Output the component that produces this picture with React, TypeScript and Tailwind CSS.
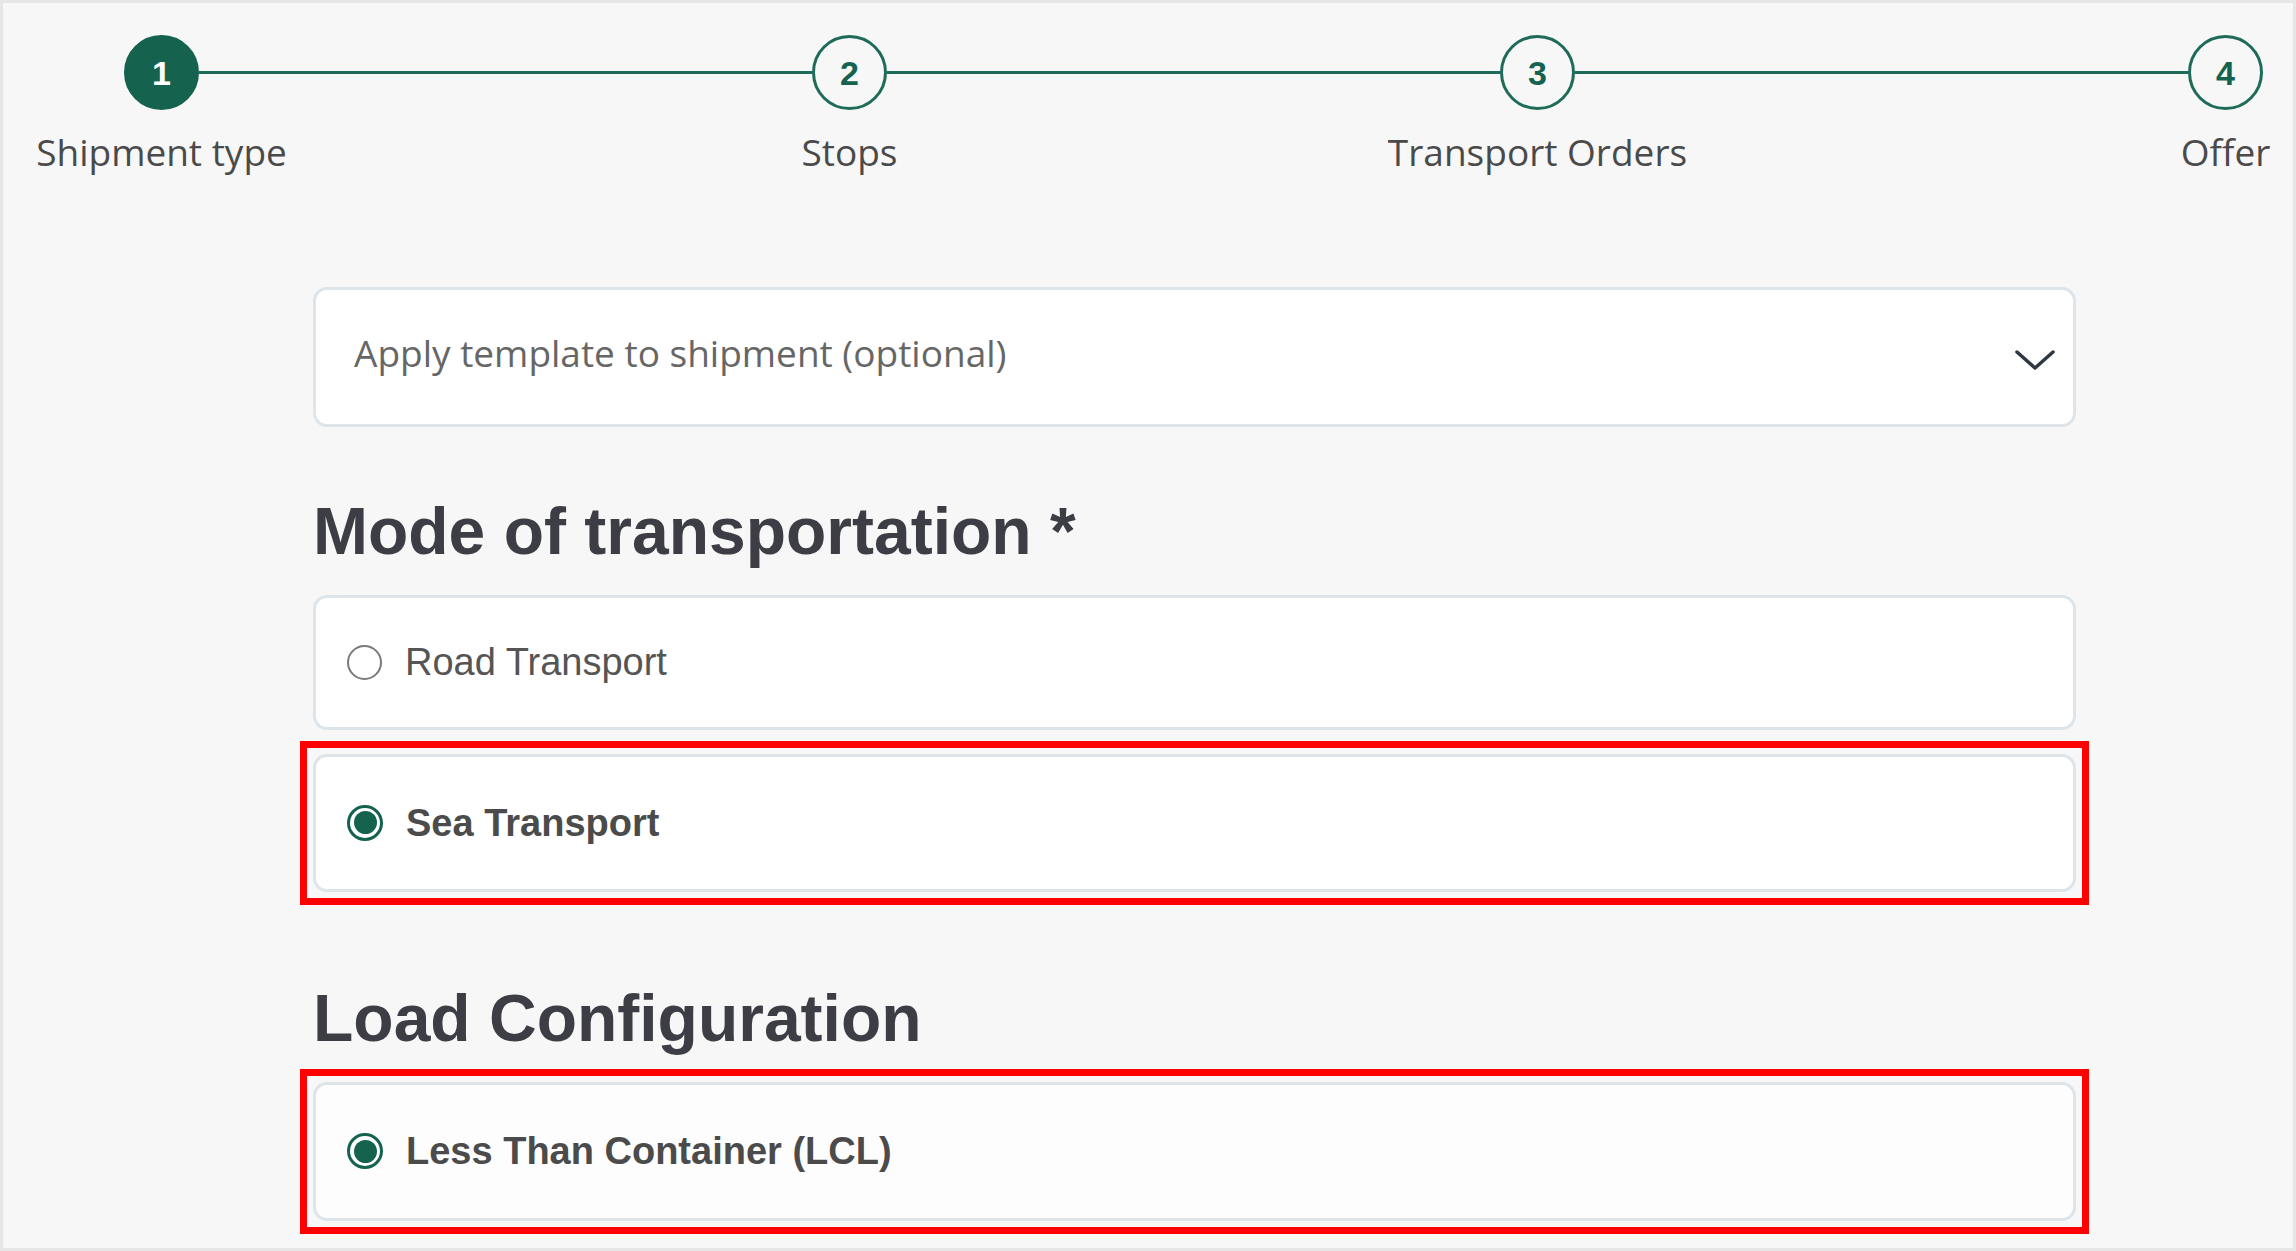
import React from "react";

function Step({ n, label, active }: { n: number; label: string; active?: boolean }) {
  return (
    <div className="flex w-[75px] shrink-0 flex-col items-center">
      <div
        className={
          active
            ? "flex h-[75px] w-[75px] items-center justify-center rounded-full border-[3px] border-[#15624f] bg-[#15624f] font-['Liberation_Sans',Arial,sans-serif] text-[34px] font-bold leading-none text-white"
            : "flex h-[75px] w-[75px] items-center justify-center rounded-full border-[3px] border-[#1e6b5a] bg-[#f7f7f7] font-['Liberation_Sans',Arial,sans-serif] text-[34px] font-bold leading-none text-[#15624f]"
        }
      >
        {n}
      </div>
      <div className="mt-[14px] whitespace-nowrap font-['Open_Sans',sans-serif] text-[37px] leading-normal text-[#4a4a4a]">
        {label}
      </div>
    </div>
  );
}

function Line() {
  return <div className="mt-[36px] h-[3px] flex-1 bg-[#1e6b5a]" />;
}

function Radio({ checked }: { checked?: boolean }) {
  if (checked) {
    return (
      <div className="flex h-[36px] w-[36px] shrink-0 items-center justify-center rounded-full border-[3px] border-[#15624f] bg-white">
        <div className="h-[23px] w-[23px] rounded-full bg-[#15624f]" />
      </div>
    );
  }
  return <div className="h-[35px] w-[35px] shrink-0 rounded-full border-2 border-[#7a7a7a] bg-white" />;
}

function OptionCard({
  label,
  checked,
  className,
}: {
  label: string;
  checked?: boolean;
  className: string;
}) {
  return (
    <div
      className={
        "flex items-center gap-[23px] rounded-[14px] border-[3px] border-[#dde5eb] bg-white pl-[31px] " +
        className
      }
    >
      <Radio checked={checked} />
      <span
        className={
          checked
            ? "font-['Liberation_Sans',Arial,sans-serif] text-[38px] font-bold leading-none text-[#4b4b4b]"
            : "font-['Liberation_Sans',Arial,sans-serif] text-[38px] leading-none text-[#555555]"
        }
      >
        {label}
      </span>
    </div>
  );
}

function Highlight({ className, children }: { className: string; children: React.ReactNode }) {
  return (
    <div className={"-mx-[13px] border-[7px] border-[#ff0000] p-[6px] " + className}>{children}</div>
  );
}

export default function App() {
  return (
    <div className="box-border h-[1251px] w-[2296px] overflow-hidden border-[3px] border-[#e6e6e6] bg-[#f7f7f7]">
      {/* Stepper */}
      <div className="flex items-start pl-[121px] pr-[30px] pt-[32px]">
        <Step n={1} label="Shipment type" active />
        <Line />
        <Step n={2} label="Stops" />
        <Line />
        <Step n={3} label="Transport Orders" />
        <Line />
        <Step n={4} label="Offer" />
      </div>

      <div className="ml-[310px] w-[1763px]">
        {/* Template select */}
        <div className="mt-[107px] flex h-[140px] items-center justify-between rounded-[14px] border-[3px] border-[#dde5eb] bg-white pl-[38px] pr-[17px]">
          <span className="pb-[8px] font-['Open_Sans',sans-serif] text-[37px] leading-normal text-[#666666]">
            Apply template to shipment (optional)
          </span>
          <svg width="42" height="22" viewBox="0 0 42 22" className="mt-[7px]" fill="none">
            <path d="M3 3 L21 19 L39 3" stroke="#2f3840" strokeWidth="3.5" strokeLinecap="round" strokeLinejoin="round" />
          </svg>
        </div>

        <h2 className="mt-[71px] h-[65px] font-['Liberation_Sans',Arial,sans-serif] text-[66px] font-bold leading-none text-[#3d3e45]">
          Mode of transportation *
        </h2>

        <OptionCard label="Road Transport" className="mt-[32px] h-[135px]" />
        <Highlight className="mt-[11px]">
          <OptionCard label="Sea Transport" checked className="h-[138px]" />
        </Highlight>

        <h2 className="mt-[80px] h-[65px] font-['Liberation_Sans',Arial,sans-serif] text-[66px] font-bold leading-none text-[#3d3e45]">
          Load Configuration
        </h2>

        <Highlight className="mt-[19px]">
          <OptionCard label="Less Than Container (LCL)" checked className="h-[139px] !bg-[#fdfdfd]" />
        </Highlight>
      </div>
    </div>
  );
}
